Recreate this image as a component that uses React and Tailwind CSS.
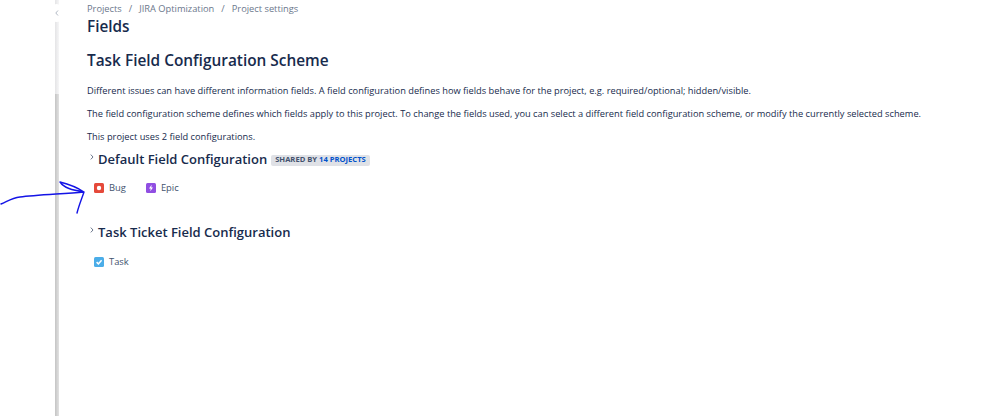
const font = { fontFamily: '"Open Sans", "Noto Sans", sans-serif' };

function Chevron() {
  return (
    <svg width="8" height="10" viewBox="0 0 8 10" className="shrink-0">
      <path d="M2.8 2.6 L5 5 L2.8 7.4" fill="none" stroke="#6b778c" strokeWidth="1" />
    </svg>
  );
}

function BugIcon() {
  return (
    <svg width="10" height="10" viewBox="0 0 10 10" className="shrink-0">
      <rect width="10" height="10" rx="1.5" fill="#e5493a" />
      <circle cx="5" cy="5" r="2.2" fill="#fff" />
    </svg>
  );
}

function EpicIcon() {
  return (
    <svg width="10" height="10" viewBox="0 0 10 10" className="shrink-0">
      <rect width="10" height="10" rx="1.5" fill="#904ee2" />
      <path d="M5.6 1.8 L3 5.6 H4.7 L4.3 8.2 L7 4.4 H5.3 Z" fill="#fff" />
    </svg>
  );
}

function TaskIcon() {
  return (
    <svg width="10" height="10" viewBox="0 0 10 10" className="shrink-0">
      <rect width="10" height="10" rx="1.5" fill="#4bade8" />
      <path d="M2.6 5.1 L4.4 6.9 L7.6 3.2" fill="none" stroke="#fff" strokeWidth="1.5" />
    </svg>
  );
}

function IssueType({ icon, label }) {
  return (
    <div className="flex items-center gap-[5px]">
      {icon}
      <span className="text-[9.4px] leading-[14px] text-[#42526e]">{label}</span>
    </div>
  );
}

function Section({ title, badge, children, className, rowClass }) {
  return (
    <div className={className}>
      <div className="flex items-center ml-[1px]">
        <div className="w-[10px] -mt-[5px]"><Chevron /></div>
        <h3 className="text-[13px] leading-[20px] font-semibold text-[#172b4d]">{title}</h3>
        {badge}
      </div>
      <div className={`flex items-center gap-[20px] ml-[7px] ${rowClass}`}>{children}</div>
    </div>
  );
}

export default function App() {
  return (
    <div className="relative flex w-[999px] h-[416px] bg-white overflow-hidden" style={font}>
      <div className="w-[55px] shrink-0" />
      <div className="relative w-[4px] shrink-0 flex flex-col">
        <div className="h-[94px] bg-gradient-to-r from-[#e4e4e6] to-[#f6f6f7]" />
        <div className="flex-1 bg-gradient-to-r from-[#c4c4c4] to-[#e2e2e2]" />
        <div className="absolute top-[4px] -left-[4px] w-[11px] h-[18px] rounded-full bg-white flex items-center justify-center">
          <svg width="6" height="8" viewBox="0 0 6 8"><path d="M4 1.5 L1.8 4 L4 6.5" fill="none" stroke="#b3bac5" strokeWidth="1" /></svg>
        </div>
      </div>
      <main className="pl-[28px] flex-1">
        <nav className="flex items-center gap-[7px] text-[9.3px] leading-[14px] text-[#6b778c] mt-[2px]">
          <span>Projects</span><span>/</span><span>JIRA Optimization</span><span>/</span><span>Project settings</span>
        </nav>
        <h1 className="text-[15.3px] leading-[20px] font-semibold text-[#172b4d]">Fields</h1>
        <h2 className="text-[15.4px] leading-[24px] font-semibold text-[#172b4d] mt-[13px]">Task Field Configuration Scheme</h2>
        <div className="text-[9.27px] leading-[14px] text-[#172b4d] mt-[11px] flex flex-col gap-[9px]">
          <p>Different issues can have different information fields. A field configuration defines how fields behave for the project, e.g. required/optional; hidden/visible.</p>
          <p>The field configuration scheme defines which fields apply to this project. To change the fields used, you can select a different field configuration scheme, or modify the currently selected scheme.</p>
          <p>This project uses 2 field configurations.</p>
        </div>
        <Section
          className="mt-[5px]"
          rowClass="mt-[12px]"
          title="Default Field Configuration"
          badge={
            <span className="ml-[4px] mt-[2px] px-[4px] h-[11px] flex items-center rounded-[2px] bg-[#dfe1e6] text-[7.6px] font-bold text-[#42526e] whitespace-nowrap">
              SHARED BY&nbsp;<span className="text-[#0052cc]">14 PROJECTS</span>
            </span>
          }
        >
          <IssueType icon={<BugIcon />} label="Bug" />
          <IssueType icon={<EpicIcon />} label="Epic" />
        </Section>
        <Section className="mt-[27px]" rowClass="mt-[13px]" title="Task Ticket Field Configuration">
          <IssueType icon={<TaskIcon />} label="Task" />
        </Section>
      </main>
      <svg className="absolute left-0 top-0 pointer-events-none" width="100" height="220" viewBox="0 0 100 220">
        <path d="M1 204 C8 201 12 198 20 197 C35 195 60 194 84 192 C78 188 68 184 60 182 C64 188 72 190 84 192 C82 198 79 205 77 213"
          fill="none" stroke="#1414e6" strokeWidth="1.4" strokeLinecap="round" strokeLinejoin="round" />
      </svg>
    </div>
  );
}
